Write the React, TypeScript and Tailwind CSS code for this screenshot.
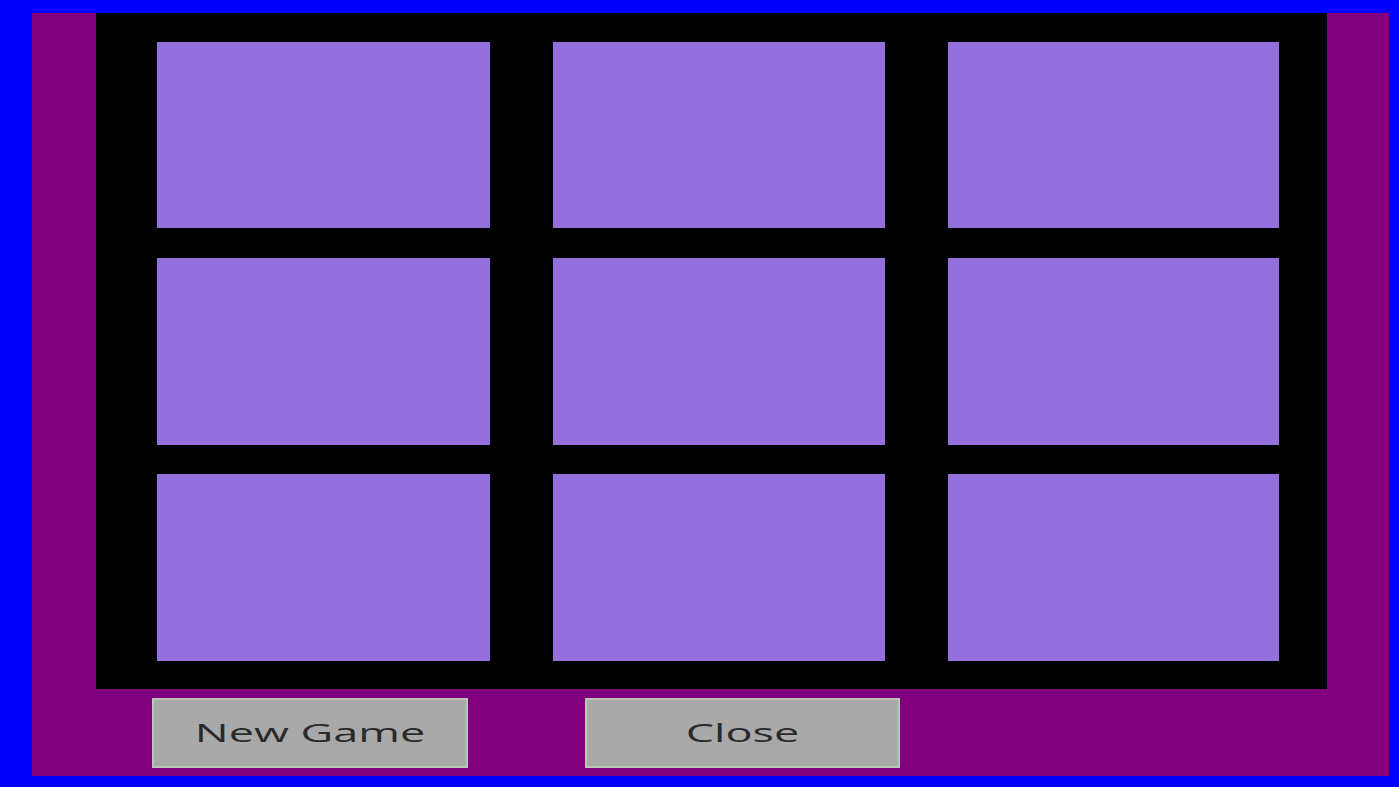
import React from "react";

export default function App() {
  const cells = Array.from({ length: 9 });
  return (
    <div className="w-[1399px] h-[787px] bg-[#0000ff] pt-[13px] pl-[32px] pr-[10px] pb-[11px] overflow-hidden">
      <div className="w-full h-full bg-[#800080] flex flex-col">
        <div className="ml-[64px] w-[1231px] h-[676px] bg-black pt-[29px] pl-[61px]">
          <div className="grid grid-cols-[333px_332px_331px] grid-rows-[186px_187px_187px] gap-x-[63px] gap-y-[29.5px]">
            {cells.map((_, i) => (
              <div key={i} className="bg-[#9370db]" />
            ))}
          </div>
        </div>
        <div className="flex mt-[9px] ml-[120px] gap-[117px]">
          <button
            className="w-[316px] h-[70px] bg-[#a9a9a9] border-2 border-[#b9c6b9] text-[25px] text-[#2a2a2a] flex items-center justify-center"
            style={{ fontFamily: '"Open Sans", "Noto Sans", sans-serif' }}
          >
            <span className="inline-block scale-x-[1.8] font-medium">New Game</span>
          </button>
          <button
            className="w-[315px] h-[70px] bg-[#a9a9a9] border-2 border-[#b9c6b9] text-[25px] text-[#2a2a2a] flex items-center justify-center"
            style={{ fontFamily: '"Open Sans", "Noto Sans", sans-serif' }}
          >
            <span className="inline-block scale-x-[1.8] font-medium">Close</span>
          </button>
        </div>
      </div>
    </div>
  );
}
